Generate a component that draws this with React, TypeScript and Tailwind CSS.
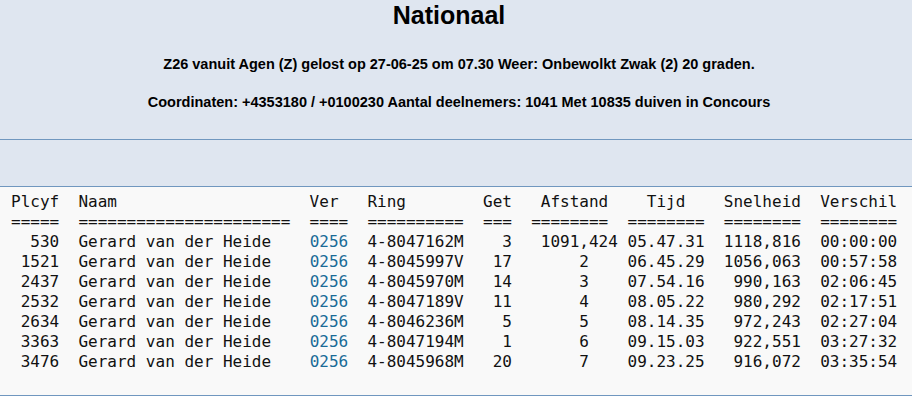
import React from 'react';

// Uitslag-pagina: kop met wedvluchtgegevens en een vaste-breedte tabel (pre)

const NAME = 'Gerard van der Heide';

type Row = {
  plc: string;
  ring: string;
  get: string;
  afst: string;
  tijd: string;
  snel: string;
  versch: string;
};

const rows: Row[] = [
  { plc: '530', ring: '4-8047162M', get: '3', afst: '   1091,424', tijd: '05.47.31', snel: '1118,816', versch: '00:00:00' },
  { plc: '1521', ring: '4-8045997V', get: '17', afst: '       2   ', tijd: '06.45.29', snel: '1056,063', versch: '00:57:58' },
  { plc: '2437', ring: '4-8045970M', get: '14', afst: '       3   ', tijd: '07.54.16', snel: '990,163', versch: '02:06:45' },
  { plc: '2532', ring: '4-8047189V', get: '11', afst: '       4   ', tijd: '08.05.22', snel: '980,292', versch: '02:17:51' },
  { plc: '2634', ring: '4-8046236M', get: '5', afst: '       5   ', tijd: '08.14.35', snel: '972,243', versch: '02:27:04' },
  { plc: '3363', ring: '4-8047194M', get: '1', afst: '       6   ', tijd: '09.15.03', snel: '922,551', versch: '03:27:32' },
  { plc: '3476', ring: '4-8045968M', get: '20', afst: '       7   ', tijd: '09.23.25', snel: '916,072', versch: '03:35:54' },
];

const header =
  'Plcyf'.padEnd(7) +
  'Naam'.padEnd(24) +
  'Ver'.padEnd(6) +
  'Ring'.padEnd(12) +
  'Get' +
  '   Afstand' +
  '    Tijd    ' +
  'Snelheid  Verschil';

const separator =
  '=====  ' +
  '='.repeat(22) +
  '  ====  ' +
  '='.repeat(10) +
  '  ===  ' +
  '========  ========  ========  ========';

function ResultLine({ r }: { r: Row }) {
  const before = r.plc.padStart(5) + '  ' + NAME.padEnd(22) + '  ';
  const after =
    '  ' +
    r.ring +
    '  ' +
    r.get.padStart(3) +
    r.afst +
    ' ' +
    r.tijd +
    '  ' +
    r.snel.padStart(8) +
    '  ' +
    r.versch;
  return (
    <div>
      {before}
      <span className="text-[#1a6b97]">0256</span>
      {after}
    </div>
  );
}

export default function App() {
  return (
    <div className="w-[912px] h-[396px] overflow-hidden bg-[#dfe6f0] text-black">
      {/* Kop */}
      <div className="h-[140px] border-b border-[#7097bf] flex flex-col items-center font-['Liberation_Sans',Arial,sans-serif] font-bold">
        <h1 className="mt-[1px] mr-[14px] h-[28px] text-[25px] leading-[28px]">Nationaal</h1>
        <p className="mt-[25px] pl-[6px] text-[14.5px] leading-[20px]">
          Z26 vanuit Agen (Z) gelost op 27-06-25 om 07.30 Weer: Onbewolkt Zwak (2) 20 graden.
        </p>
        <p className="mt-[18px] pl-[6px] text-[14.5px] leading-[20px]">
          Coordinaten: +4353180 / +0100230 Aantal deelnemers: 1041 Met 10835 duiven in Concours
        </p>
      </div>

      {/* Lege balk */}
      <div className="h-[47px] border-b border-[#7097bf]" />

      {/* Uitslag */}
      <pre className="h-[209px] border-b border-[#7097bf] bg-[#f9f9f9] pt-[5px] pl-[11px] font-['DejaVu_Sans_Mono','Liberation_Mono',monospace] text-[16px] leading-[20px] text-[#111]">
        <div>{header}</div>
        <div>{separator}</div>
        {rows.map((r) => (
          <ResultLine key={r.plc} r={r} />
        ))}
      </pre>
    </div>
  );
}
